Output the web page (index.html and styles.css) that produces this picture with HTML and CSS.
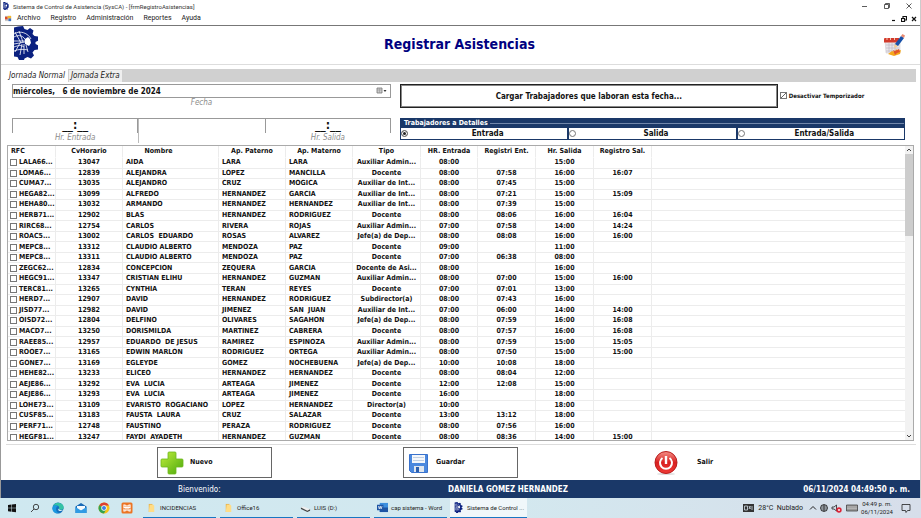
FILE: index.html
```html
<!DOCTYPE html>
<html lang="es">
<head>
<meta charset="utf-8">
<title>Sistema de Control de Asistencia (SysCA)</title>
<link rel="stylesheet" href="styles.css">
</head>
<body>
<svg class="defs" aria-hidden="true">
  <symbol id="gear" viewBox="0 0 24 34">
    <path fill="#0a2080" d="M0 1.500L4 .5 9 0l1.500 3 3 1L16 2l3.500 2.500-1 3.500 2 2 3.500.5.500 4-3 1.500v2l3 1.500-.5 4-3.500.5-2 2.500 1.500 3-3 3-3.500-1.500-3 1.500-1 3L5 34l-1.500-3L0 30.500z"/>
    <path fill="none" stroke="#fff" stroke-width=".8" d="M0 8c6-4 14-1 17 5M0 11c5-3 10-1 12 4M0 15h11M0 18l11-2M5 5l4 11M1 6l6 11M6 17l-5 9M8 18l-2 11M10 18v10M0 21c5-2 7-2 10 0M12 19l2 7M0 25c4-2 10-2 14-1"/>
    <path fill="#fff" d="M11 13l3-2 2 2 1 4-2 3-4-2z"/>
  </symbol>
  <symbol id="folder" viewBox="0 0 8 9"><path fill="#e9b44c" d="M1 0h4v9H1z"/><path fill="#ffdc86" d="M2 1h4l1 1v7H1z"/></symbol>
</svg>
<div class="window">
  <header class="titlebar">
    <svg class="app-icon"><use href="#gear"/></svg>
    <span>Sistema de Control de Asistencia (SysCA) - [frmRegistroAsistencias]</span>
    <div class="controls">
      <button aria-label="Minimizar"><svg viewBox="0 0 6 6"><path d="M0 3.500h5"/></svg></button>
      <button aria-label="Restaurar"><svg viewBox="0 0 6 6"><path d="M.5 1.500h4v4h-4zM1.500 1.500v-1h4v4h-1"/></svg></button>
      <button aria-label="Cerrar"><svg viewBox="0 0 6 6"><path d="M.5.5l5 5M5.500.5l-5 5"/></svg></button>
    </div>
  </header>
  <nav class="menubar">
    <svg class="form-icon" viewBox="0 0 8 8"><path fill="#c8c8c8" d="M0 1h7v6H0z"/><path fill="#d9482b" d="M0 2h3v3H0z"/><path fill="#f3b52f" d="M3 1h4v3H3z"/><path fill="#3b72c4" d="M4 4h3v3H4z"/></svg>
    <a href="#">Archivo</a><a href="#">Registro</a><a href="#">Administración</a><a href="#">Reportes</a><a href="#">Ayuda</a>
    <div class="controls child">
      <button aria-label="Minimizar formulario"><svg viewBox="0 0 6 6"><path d="M1 4.500h3"/></svg></button>
      <button aria-label="Restaurar formulario"><svg viewBox="0 0 6 6"><path d="M.5 2.500h3v3h-3zM2 2V.5h3.500V4H4"/></svg></button>
      <button aria-label="Cerrar formulario"><svg viewBox="0 0 6 6"><path d="M1 1l4 4M5 1L1 5"/></svg></button>
    </div>
  </nav>
  <div class="banner">
    <svg class="logo"><use href="#gear"/></svg>
    <h1>Registrar Asistencias</h1>
    <svg class="calendar" viewBox="0 0 21 23">
      <path fill="#e9e6ea" stroke="#c5c0c8" stroke-width=".5" d="M1 5h15v14H2z"/><path fill="#d23b2c" d="M0 4.500Q0 4 1 4h14v4.500H0z"/>
      <path fill="#f7c2ae" d="M2.500 4h1v2h-1zM6 4h1v2H6zM10 4h1v2h-1z"/>
      <path stroke="#b9b4c0" stroke-width=".6" d="M2 11h13M2 14h13M2 17h10M5 9v9M8 9v9M11 9v9"/>
      <path fill="#f5a81c" d="M4 20l4-3 3 1 1-3 2 2 3-1-1 4-6 2z"/><path fill="#e2542a" d="M9 16l2 1 4-2 1 3-3 1-2 2z"/>
      <path fill="#f2cf96" d="M10 13l1-3 3 2-3 2z"/><path fill="#1650a8" d="M11 10l6-8 3 2-6 8z"/><path fill="#e98a72" d="M17 2l1.500-2L21 1.500 20 4z"/>
    </svg>
  </div>
  <main class="panel">
    <div class="tabs">
      <button class="tab active">Jornada Normal</button><button class="tab">Jornada Extra</button>
    </div>
    <div class="filters">
      <div class="left">
        <div class="date">
          <input id="fecha" type="text" value="miércoles,   6 de noviembre de 2024">
          <svg viewBox="0 0 12 8"><path fill="#ccc" stroke="#777" stroke-width=".8" d="M1 1h5v5H1z"/><path stroke="#999" stroke-width=".6" d="M1 3h5M3.500 1v5"/><path fill="#333" d="M7.500 3h3L9 5z"/></svg>
        </div>
        <label class="caption" for="fecha">Fecha</label>
        <div class="times">
          <div><input id="entrada" type="text" value="__:__"><label class="caption" for="entrada">Hr. Entrada</label></div>
          <div class="spacer"></div>
          <div><input id="salida" type="text" value="__:__"><label class="caption" for="salida">Hr. Salida</label></div>
        </div>
      </div>
      <div class="right">
        <div class="load">
          <button class="load-btn">Cargar Trabajadores que laboran esta fecha...</button>
          <label class="timer"><input type="checkbox" class="box" checked>Desactivar Temporizador</label>
        </div>
        <fieldset>
          <legend>Trabajadores a Detalles</legend>
          <div class="options">
            <label><input type="radio" name="det" checked><span>Entrada</span></label>
            <label><input type="radio" name="det"><span>Salida</span></label>
            <label><input type="radio" name="det"><span>Entrada/Salida</span></label>
          </div>
        </fieldset>
      </div>
    </div>
    <div class="list">
      <table>
        <colgroup><col class="c-rfc"><col class="c-id"><col class="c-name"><col class="c-last"><col class="c-last"><col class="c-type"><col class="c-in"><col class="c-time"><col class="c-time"><col class="c-time"><col></colgroup>
        <thead><tr><th>RFC<th>CvHorario<th>Nombre<th>Ap. Paterno<th>Ap. Materno<th>Tipo<th>HR. Entrada<th>Registri Ent.<th>Hr. Salida<th>Registro Sal.<th></tr></thead>
        <tbody>
        <tr><td><label><input type="checkbox" class="box">LALA66...</label><td>13047<td>AIDA<td>LARA<td>LARA<td>Auxiliar Admin...<td>08:00<td><td>15:00<td><td></tr>
        <tr><td><label><input type="checkbox" class="box">LOMA6...</label><td>12839<td>ALEJANDRA<td>LOPEZ<td>MANCILLA<td>Docente<td>08:00<td>07:58<td>16:00<td>16:07<td></tr>
        <tr><td><label><input type="checkbox" class="box">CUMA7...</label><td>13035<td>ALEJANDRO<td>CRUZ<td>MOGICA<td>Auxiliar de Int...<td>08:00<td>07:45<td>15:00<td><td></tr>
        <tr><td><label><input type="checkbox" class="box">HEGA82...</label><td>13099<td>ALFREDO<td>HERNANDEZ<td>GARCIA<td>Auxiliar de Int...<td>08:00<td>07:21<td>15:00<td>15:09<td></tr>
        <tr><td><label><input type="checkbox" class="box">HEHA80...</label><td>13032<td>ARMANDO<td>HERNANDEZ<td>HERNANDEZ<td>Auxiliar de Int...<td>08:00<td>07:39<td>15:00<td><td></tr>
        <tr><td><label><input type="checkbox" class="box">HERB71...</label><td>12902<td>BLAS<td>HERNANDEZ<td>RODRIGUEZ<td>Docente<td>08:00<td>08:06<td>16:00<td>16:04<td></tr>
        <tr><td><label><input type="checkbox" class="box">RIRC68...</label><td>12754<td>CARLOS<td>RIVERA<td>ROJAS<td>Auxiliar Admin...<td>07:00<td>07:58<td>14:00<td>14:24<td></tr>
        <tr><td><label><input type="checkbox" class="box">ROAC5...</label><td>13002<td>CARLOS  EDUARDO<td>ROSAS<td>ALVAREZ<td>Jefe(a) de Dep...<td>08:00<td>08:08<td>16:00<td>16:00<td></tr>
        <tr><td><label><input type="checkbox" class="box">MEPC8...</label><td>13312<td>CLAUDIO ALBERTO<td>MENDOZA<td>PAZ<td>Docente<td>09:00<td><td>11:00<td><td></tr>
        <tr><td><label><input type="checkbox" class="box">MEPC8...</label><td>13311<td>CLAUDIO ALBERTO<td>MENDOZA<td>PAZ<td>Docente<td>07:00<td>06:38<td>08:00<td><td></tr>
        <tr><td><label><input type="checkbox" class="box">ZEGC62...</label><td>12834<td>CONCEPCION<td>ZEQUERA<td>GARCIA<td>Docente de Asi...<td>08:00<td><td>16:00<td><td></tr>
        <tr><td><label><input type="checkbox" class="box">HEGC91...</label><td>13347<td>CRISTIAN ELIHU<td>HERNANDEZ<td>GUZMAN<td>Auxiliar Admin...<td>08:00<td>07:00<td>15:00<td>16:00<td></tr>
        <tr><td><label><input type="checkbox" class="box">TERC81...</label><td>13265<td>CYNTHIA<td>TERAN<td>REYES<td>Docente<td>07:00<td>07:01<td>13:00<td><td></tr>
        <tr><td><label><input type="checkbox" class="box">HERD7...</label><td>12907<td>DAVID<td>HERNANDEZ<td>RODRIGUEZ<td>Subdirector(a)<td>08:00<td>07:43<td>16:00<td><td></tr>
        <tr><td><label><input type="checkbox" class="box">JISD77...</label><td>12982<td>DAVID<td>JIMENEZ<td>SAN  JUAN<td>Auxiliar de Int...<td>07:00<td>06:00<td>14:00<td>14:00<td></tr>
        <tr><td><label><input type="checkbox" class="box">OISD72...</label><td>12804<td>DELFINO<td>OLIVARES<td>SAGAHON<td>Jefe(a) de Dep...<td>08:00<td>07:59<td>16:00<td>16:08<td></tr>
        <tr><td><label><input type="checkbox" class="box">MACD7...</label><td>13250<td>DORISMILDA<td>MARTINEZ<td>CABRERA<td>Docente<td>08:00<td>07:57<td>16:00<td>16:08<td></tr>
        <tr><td><label><input type="checkbox" class="box">RAEE85...</label><td>12957<td>EDUARDO  DE JESUS<td>RAMIREZ<td>ESPINOZA<td>Auxiliar Admin...<td>08:00<td>07:59<td>15:00<td>15:05<td></tr>
        <tr><td><label><input type="checkbox" class="box">ROOE7...</label><td>13165<td>EDWIN MARLON<td>RODRIGUEZ<td>ORTEGA<td>Auxiliar Admin...<td>08:00<td>07:50<td>15:00<td>15:00<td></tr>
        <tr><td><label><input type="checkbox" class="box">GONE7...</label><td>13169<td>EGLEYDE<td>GOMEZ<td>NOCHEBUENA<td>Jefe(a) de Dep...<td>10:00<td>10:08<td>18:00<td><td></tr>
        <tr><td><label><input type="checkbox" class="box">HEHE82...</label><td>13233<td>ELICEO<td>HERNANDEZ<td>HERNANDEZ<td>Docente<td>08:00<td>08:04<td>12:00<td><td></tr>
        <tr><td><label><input type="checkbox" class="box">AEJE86...</label><td>13292<td>EVA  LUCIA<td>ARTEAGA<td>JIMENEZ<td>Docente<td>12:00<td>12:08<td>15:00<td><td></tr>
        <tr><td><label><input type="checkbox" class="box">AEJE86...</label><td>13293<td>EVA  LUCIA<td>ARTEAGA<td>JIMENEZ<td>Docente<td>16:00<td><td>18:00<td><td></tr>
        <tr><td><label><input type="checkbox" class="box">LOHE73...</label><td>13109<td>EVARISTO  ROGACIANO<td>LOPEZ<td>HERNANDEZ<td>Director(a)<td>10:00<td><td>18:00<td><td></tr>
        <tr><td><label><input type="checkbox" class="box">CUSF85...</label><td>13183<td>FAUSTA  LAURA<td>CRUZ<td>SALAZAR<td>Docente<td>13:00<td>13:12<td>18:00<td><td></tr>
        <tr><td><label><input type="checkbox" class="box">PERF71...</label><td>12748<td>FAUSTINO<td>PERAZA<td>RODRIGUEZ<td>Docente<td>08:00<td>07:56<td>16:00<td><td></tr>
        <tr><td><label><input type="checkbox" class="box">HEGF81...</label><td>13247<td>FAYDI  AYADETH<td>HERNANDEZ<td>GUZMAN<td>Docente<td>08:00<td>08:36<td>14:00<td>15:00<td></tr>
        </tbody>
      </table>
      <div class="scrollbar">
        <svg viewBox="0 0 8 8"><path d="M2 5l2-2 2 2"/></svg>
        <div class="thumb"></div>
        <svg viewBox="0 0 8 8"><path d="M2 3l2 2 2-2"/></svg>
      </div>
    </div>
  </main>
  <div class="actions">
    <button>
      <svg viewBox="0 0 24 24"><defs><linearGradient id="g" x2="1" y2="1"><stop stop-color="#c0ee3c"/><stop offset="1" stop-color="#4aa80c"/></linearGradient></defs><path fill="url(#g)" stroke="#6cb81c" stroke-width=".8" d="M9 1h6q1 0 1 1v6h6q1 0 1 1v6q0 1-1 1h-6v6q0 1-1 1H9q-1 0-1-1v-6H2q-1 0-1-1V9q0-1 1-1h6V2q0-1 1-1z"/></svg>
      Nuevo
    </button>
    <button>
      <svg viewBox="0 0 24 24"><path fill="#4a88de" stroke="#3a72cc" d="M3.500 3.500h18v18h-16l-2-2z"/><path fill="#f4f7fb" d="M6 4h13v8H6z"/><path stroke="#c2d0e2" d="M7 6.500h11M7 9.500h11"/><path fill="#dfe6ee" d="M8 15h10v6H8z"/><path fill="#2c5fae" d="M10 16h3v5h-3z"/></svg>
      Guardar
    </button>
    <button class="exit">
      <svg viewBox="0 0 24 24"><defs><linearGradient id="r" x2="0" y2="1"><stop stop-color="#f49088"/><stop offset=".5" stop-color="#d92020"/><stop offset="1" stop-color="#ee3a36"/></linearGradient></defs><ellipse cx="12" cy="23" rx="9" ry="1" fill="#ddd"/><circle cx="12" cy="11.500" r="11" fill="url(#r)" stroke="#b81c1c"/><path fill="none" stroke="#fff" stroke-width="2" d="M8.500 7a6 6 0 1 0 7 0"/><path stroke="#fff" stroke-width="2.400" d="M12 5v8"/></svg>
      Salir
    </button>
  </div>
  <div class="status"><span class="welcome">Bienvenido:</span><b>DANIELA GOMEZ HERNANDEZ</b><b class="clock">06/11/2024 04:49:50 p. m.</b></div>
</div>
<footer class="taskbar">
  <div class="pins">
    <button aria-label="Inicio"><svg viewBox="0 0 12 12"><path fill="#111" d="M2 3l3.500-.5v3.300H2zM6 2.400l4-.5v3.900H6zM2 6.300h3.500v3.400L2 9.200zM6 6.300h4v4l-4-.5z"/></svg></button>
    <button aria-label="Buscar"><svg viewBox="0 0 12 12"><circle cx="7" cy="5" r="2.700" fill="none" stroke="#333" stroke-width=".9"/><path stroke="#333" stroke-width=".9" d="M5 7l-3 3"/></svg></button>
    <button aria-label="Edge"><svg viewBox="0 0 12 12"><circle cx="6" cy="6" r="5.500" fill="#1670bd"/><path fill="#35c2a4" d="M1 4.500C2 1 6 0 9 1.500s3.500 5 1.500 6c-1.500.7-4 .3-3.500-1S7 3.500 4.500 3.500 1.500 4 1 4.500z"/><path fill="#1b98e0" d="M.5 6C1 3 4 2.700 6 4 3 5 3.500 10 7 11 3 12 0 9 .5 6z"/><path fill="#dff0f6" d="M7 6.500c0 1.500 2 2 4 1.400-1 1.500-4.500 1.700-4.800-.4z"/></svg></button>
    <button aria-label="Correo"><svg viewBox="0 0 12 12"><path fill="#1769b5" d="M.5 4.500L6 1l5.500 3.500V11H.5z"/><path fill="#f5fafd" d="M2 4h8v3L6 9 2 7z"/><path fill="#2f9be4" d="M.5 5L6 8.500 11.500 5v6H.5z"/></svg></button>
    <button aria-label="Chrome"><svg viewBox="0 0 12 12"><circle cx="6" cy="6" r="5.500" fill="#f6c419"/><path fill="#dc3f32" d="M6 6L1.200 3.300a5.500 5.500 0 0 1 9.700.2H6z"/><path fill="#32a350" d="M6 6L1.200 3.300A5.500 5.500 0 0 0 6 11.500l2-4z"/><circle cx="6" cy="6" r="2.700" fill="#fff"/><circle cx="6" cy="6" r="2" fill="#3e7fe6"/></svg></button>
    <button aria-label="XAMPP"><svg viewBox="0 0 12 12"><rect x=".5" y=".5" width="11" height="11" rx="1.500" fill="#ec7424"/><path fill="none" stroke="#fff" stroke-width="1.200" d="M4.500 3H3v2.500h6V3H7.500M4.500 9H3V6.500M7.500 9H9V6.500M5 3v6M7 3v6"/></svg></button>
  </div>
  <div class="tasks">
    <button><svg viewBox="0 0 12 12"><use href="#folder" x="2" y="2" width="8" height="9"/></svg>INCIDENCIAS</button>
    <button><svg viewBox="0 0 12 12"><use href="#folder" x="2" y="2" width="8" height="9"/></svg>Office16</button>
    <button><svg viewBox="0 0 12 12"><path fill="#eee" d="M1 6l3-1 7 3-3 2z"/><path fill="#444" d="M1 6l7 3.500L11 8v1.500l-3 1.300L1 7.500z"/></svg>LUIS (D:)</button>
    <button><svg viewBox="0 0 12 12"><path fill="#3c8ede" d="M3 1h9v10H3z"/><path fill="#1d54a4" d="M3 6h9v5H3zM0 3h7v6H0z"/><path fill="none" stroke="#fff" stroke-width=".8" d="M1.500 4.500l1 3 1-3 1 3 1-3"/></svg>cap sistema - Word</button>
    <button class="current"><svg><use href="#gear"/></svg>Sistema de Control ...</button>
  </div>
  <div class="tray">
    <svg viewBox="0 0 12 10"><path fill="#333" d="M0 1h11v8H0z"/><path fill="none" stroke="#d3e0e8" stroke-width=".8" d="M1.500 3h3v4h-3zM6 3l1.500 3M7.500 3L6 6M9 3v4"/></svg>
    <span class="weather">28°C&nbsp; Nublado</span>
    <svg class="small" viewBox="0 0 8 10"><path fill="none" stroke="#222" d="M1 6.500l3-3 3 3"/></svg>
    <svg class="small" viewBox="0 0 8 10"><g fill="none" stroke="#222" stroke-width=".8"><circle cx="4" cy="5" r="3.500"/><path d="M.5 5h7M1 3h6M1 7h6M4 1.500v7"/></g></svg>
    <svg viewBox="0 0 12 10"><path fill="none" stroke="#222" stroke-width=".8" d="M1 4h2l2.500-2v6L3 6H1z"/><circle cx="8" cy="7" r="2.700" fill="#dd2438"/><path stroke="#fff" stroke-width=".7" d="M7 6l2 2M9 6L7 8"/></svg>
    <svg viewBox="0 0 12 10"><path fill="#999" stroke="#444" stroke-width=".8" d="M.5 2h11v6H.5z"/><path stroke="#ddd" stroke-width=".8" stroke-dasharray="1 1" d="M1.500 4h9M1.500 5.500h9"/></svg>
    <span class="datetime">04:49 p. m.<br>06/11/2024</span>
    <svg class="notice" viewBox="0 0 10 10"><path fill="none" stroke="#222" stroke-width=".8" d="M1 1.500h8v6H6.500L5 9.500l-.5-2H1z"/></svg>
  </div>
</footer>
</body>
</html>
```

FILE: styles.css
```css
* { box-sizing: border-box; }
body {
  margin: 0;
  min-height: 100vh;
  display: flex;
  flex-direction: column;
  background: #fff;
  color: #111;
  font: 7px/9px Roboto, "Noto Sans", sans-serif;
}
button, input { font: inherit; color: inherit; margin: 0; }
button { border: 0; padding: 0; background: none; }
.defs { position: absolute; width: 0; height: 0; }
.window {
  flex: 1;
  display: flex;
  flex-direction: column;
  border-left: 1px solid #999;
  border-right: 1px solid #ccc;
}
.titlebar { display: flex; align-items: center; height: 12px; padding: 0 4px 0 1px; gap: 3px; color: #333; font-size: 6px; }
.app-icon { width: 8px; height: 8px; }
.controls { display: flex; gap: 16px; margin-left: auto; padding-right: 4px; }
.controls button { display: flex; }
.controls svg { width: 6px; height: 6px; fill: none; stroke: #333; stroke-width: .8; }
.controls.child { gap: 4px; padding: 0; }
.controls.child svg { stroke: #111; stroke-width: 1.2; }
.menubar { display: flex; align-items: center; height: 14px; padding: 0 3px 0 4px; gap: 10px; border-bottom: 1px solid #777; }
.menubar a { color: #222; text-decoration: none; }
.form-icon { width: 7px; height: 7px; margin-right: -5px; }
.banner {
  display: grid;
  grid-template-columns: 1fr auto 1fr;
  align-items: center;
  height: 39px;
  padding: 0 15px 0 13px;
  border-bottom: 1px solid #ddd;
}
.logo { width: 24px; height: 34px; margin-bottom: 4px; }
h1 { margin: 0; padding-bottom: 2px; color: #000080; font: bold 14px/16px "DejaVu Sans Condensed", "DejaVu Sans", sans-serif; }
.calendar { width: 21px; height: 23px; justify-self: end; }

.panel, .actions, .status { font-family: "DejaVu Sans Condensed", "DejaVu Sans", sans-serif; font-weight: bold; }
.panel { margin: 4px 4px 0 5px; border-bottom: 1px solid #ddd; padding-bottom: 3px; }
.tabs { display: flex; align-items: flex-end; height: 13px; gap: 1px; background: #d0d0d0; }
.tab { height: 12px; padding: 0 2px; background: #efefef; font: italic 8px/12px "DejaVu Sans Condensed", sans-serif; color: #222; }
.tab.active { height: 13px; padding: 0 3px; background: #fff; }
.filters { display: grid; grid-template-columns: 379px 1fr; gap: 9px; padding: 2px 11px 0 6px; }
.date { display: flex; align-items: center; height: 14px; border: 1px solid #999; padding-right: 2px; }
.date input { flex: 1; min-width: 0; border: 0; padding: 0; outline: 0; background: none; font-size: 8px; font-weight: bold; }
.date svg { width: 12px; height: 8px; }
.caption { display: block; height: 10px; font: italic 8px/10px "DejaVu Sans Condensed", sans-serif; color: #8c8c8c; text-align: center; }
.times { display: grid; grid-template-columns: repeat(3, 1fr); margin-top: 10px; border-top: 1px solid #999; }
.times input { display: block; width: 100%; height: 14px; border: solid #999; border-width: 0 1px; padding: 0 0 2px; background: none; text-align: center; font-size: 12px; font-weight: bold; line-height: 12px; }
.spacer { border-left: 1px solid #bbb; }
.load { display: flex; gap: 2px; height: 24px; }
.load-btn { flex: 3; border: 1px solid #222; outline: 1px solid #888; outline-offset: -2px; font-size: 8px; font-weight: bold; }
.timer { flex: 1; display: flex; align-items: center; gap: 2px; font-size: 6px; padding-bottom: 2px; white-space: nowrap; }
.box { appearance: none; flex: none; width: 7px; height: 7px; border: 1px solid #777; background: #fff; }
.box:checked { background: linear-gradient(135deg, #fff 45%, #666 45% 60%, #fff 60%); }
fieldset { margin: 10px 0 0; padding: 0 1px 1px; border: 0; background: #1a3868; }
legend { float: left; display: flex; align-items: center; width: 100%; height: 10px; padding: 0 0 0 3px; color: #fff; font-size: 7px; gap: 2px; }
legend::after { content: ""; flex: 1; height: 1px; background: #7187ab; }
.options { clear: both; display: grid; grid-template-columns: repeat(3, 1fr); gap: 2px; }
.options label { display: flex; align-items: center; height: 11px; background: #fff; font-size: 8px; }
.options span { flex: 1; text-align: center; }
.options input { appearance: none; width: 7px; height: 7px; border: 1px solid #777; border-radius: 50%; }
.options input:checked { background: #222; box-shadow: inset 0 0 0 1px #fff; }

.list { display: flex; height: 296px; margin: 2px 2px 0 1px; overflow: hidden; border: 1px solid #aaa; }
table { flex: 1; min-width: 0; height: 297px; table-layout: fixed; border-collapse: separate; border-spacing: 0; }
.c-rfc { width: 48px; }
.c-id { width: 67px; }
.c-name { width: 96px; }
.c-last { width: 67px; }
.c-type { width: 68px; }
.c-in { width: 57px; }
.c-time { width: 58px; }
th, td { padding: 0; border: solid #ececec; border-width: 0 1px 1px 0; text-align: center; line-height: 9px; white-space: pre; overflow: hidden; }
th { height: 12px; border-bottom-color: #fff; }
th:first-child { text-align: left; padding-left: 3px; }
th:nth-child(3) { padding-right: 24px; }
td:nth-child(3), td:nth-child(4), td:nth-child(5) { text-align: left; padding-left: 3px; }
td:first-child { text-align: left; padding-left: 2px; }
td:last-child, th:last-child { border-right: 0; }
td label { display: flex; align-items: center; gap: 2px; }
.scrollbar { display: flex; flex-direction: column; width: 8px; background: #f2f2f2; }
.scrollbar svg { width: 8px; height: 8px; fill: none; stroke: #444; }
.scrollbar .thumb { height: 82px; margin-bottom: auto; background: #cdcdcd; }

.actions { flex: 1; display: grid; grid-template-columns: repeat(3, 115px); column-gap: 131px; align-content: center; justify-content: start; padding-left: 156px; }
.actions button { display: flex; align-items: center; gap: 6px; height: 31px; padding-left: 2px; border: 1px solid #666; font-size: 7px; font-weight: bold; }
.actions svg { width: 24px; height: 24px; }
.actions .exit { border-color: transparent; gap: 19px; padding-left: 4px; }
.status { display: grid; grid-template-columns: 1fr auto 1fr; align-items: center; height: 18px; padding: 0 10px 0 105px; background: #1a3868; color: #fff; font-size: 8px; }
.welcome { font-weight: normal; padding-left: 72px; }
.clock { text-align: right; }

.taskbar { display: flex; height: 20px; background: linear-gradient(90deg, #cfe8f0, #d3e8ef 55%, #d7deea); color: #222; font-size: 6px; }
.pins { display: flex; align-items: center; gap: 11px; padding-left: 6px; width: 143px; }
.pins button { display: flex; }
.pins svg, .tray svg { width: 12px; height: 12px; }
.tasks { display: flex; gap: 4px; }
.tasks button { display: flex; align-items: center; gap: 3px; width: 73px; padding-left: 3px; border-bottom: 1px solid #1876c2; white-space: nowrap; }
.tasks svg { width: 11px; height: 11px; flex: none; }
.tasks .current { width: 77px; margin-left: -1px; background: #f0f7fa; }
.tray { display: flex; align-items: center; gap: 3px; margin-left: auto; padding-right: 10px; }
.tray svg.small { width: 8px; height: 10px; }
.tray .weather { font-size: 7px; padding-right: 3px; }
.tray .datetime { line-height: 8px; text-align: center; font-size: 6px; }
.tray svg.notice { width: 10px; height: 10px; margin-left: 5px; }
```
